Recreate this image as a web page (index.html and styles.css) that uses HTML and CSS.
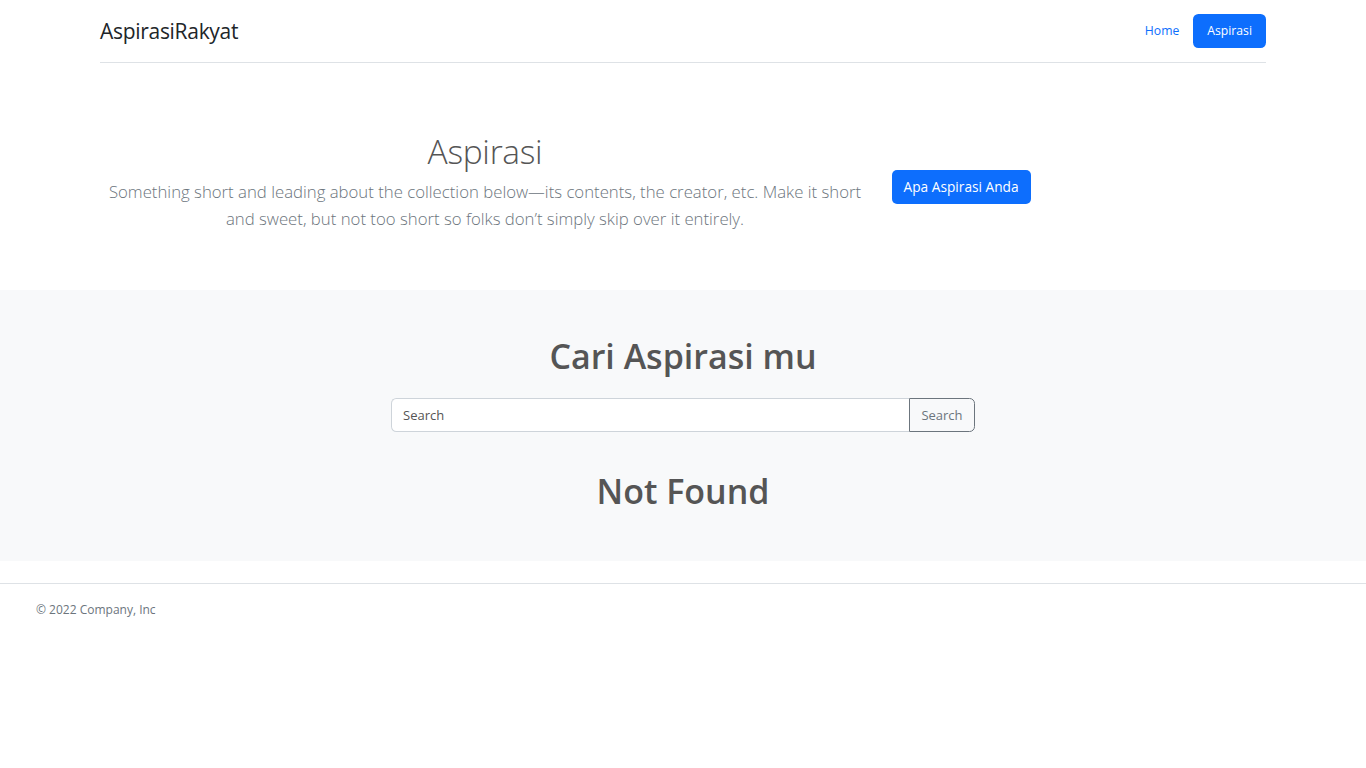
FILE: index.html
```html
<!DOCTYPE html>
<html lang="id">
<head>
<meta charset="utf-8">
<title>AspirasiRakyat</title>
<link rel="stylesheet" href="styles.css">
</head>
<body>
<header class="site-header">
  <a class="brand" href="#">AspirasiRakyat</a>
  <nav class="nav">
    <a class="nav-link" href="#">Home</a>
    <a class="nav-link active" href="#">Aspirasi</a>
  </nav>
</header>

<section class="hero">
  <div class="hero-text">
    <h1 class="hero-title">Aspirasi</h1>
    <p class="lead">Something short and leading about the collection below—its contents, the creator, etc. Make it short and sweet, but not too short so folks don’t simply skip over it entirely.</p>
  </div>
  <div class="hero-action">
    <a class="btn-primary" href="#">Apa Aspirasi Anda</a>
  </div>
</section>

<main class="search-section">
  <h1 class="section-title">Cari Aspirasi mu</h1>
  <form class="search-form">
    <input class="search-input" type="text" placeholder="Search">
    <button class="search-btn" type="button">Search</button>
  </form>
  <h1 class="not-found">Not Found</h1>
</main>

<footer class="site-footer">
  <p class="copyright">© 2022 Company, Inc</p>
</footer>
</body>
</html>
```

FILE: styles.css
```css
* { box-sizing: border-box; }

body {
  margin: 0;
  font-family: "Open Sans", "Noto Sans", "Liberation Sans", sans-serif;
  font-size: 14.4px;
  line-height: 1.5;
  color: #212529;
  background: #fff;
}

a { text-decoration: none; }

.site-header {
  width: 1166px;
  margin: 0 auto 21.6px;
  height: 63px;
  display: flex;
  align-items: center;
  justify-content: space-between;
  border-bottom: 1px solid #dee2e6;
  padding-bottom: 1px;
}

.brand {
  font-size: 21px;
  color: #212529;
  letter-spacing: -0.3px;
  margin-top: 3px;
}

.nav {
  display: flex;
  align-items: center;
}

.nav-link {
  font-size: 12.2px;
  line-height: 20px;
  padding: 7px 14px;
  color: #0d6efd;
  border-radius: 5.4px;
}

.nav-link.active {
  background: #0d6efd;
  color: #fff;
}

.hero {
  width: 1166px;
  margin: 0 auto;
  padding: 43.2px 0;
  display: flex;
  align-items: center;
  gap: 21.6px;
}

.hero-text {
  width: 770px;
  text-align: center;
}

.hero-title {
  margin: 2px 0 5.2px;
  font-size: 33.5px;
  font-weight: 300;
  line-height: 43.2px;
  color: #555;
  letter-spacing: -0.3px;
}

.lead {
  margin: 0 0 14.4px;
  font-size: 16.75px;
  font-weight: 300;
  line-height: 27px;
  color: #6c757d;
}

.btn-primary {
  display: inline-block;
  background: #0d6efd;
  color: #fff;
  font-size: 13.7px;
  line-height: 20px;
  padding: 7px 12px;
  border-radius: 5px;
}

.search-section {
  background: #f8f9fa;
  padding: 45px 0 48px;
  text-align: center;
}

.section-title {
  margin: 0 0 19.6px;
  font-size: 34px;
  font-weight: 600;
  line-height: 43.2px;
  color: #555;
}

.search-form {
  width: 584px;
  margin: 0 auto;
  display: flex;
  height: 34px;
}

.search-input {
  flex: 1;
  min-width: 0;
  height: 34px;
  border: 1px solid #ced4da;
  border-right: none;
  border-radius: 5.4px 0 0 5.4px;
  padding: 0 11px;
  font-family: inherit;
  font-size: 13px;
  color: #212529;
  background: #fff;
  outline: none;
}

.search-input::placeholder { color: #555; }

.search-btn {
  width: 66px;
  height: 34px;
  border: 1px solid #6c757d;
  border-radius: 0 5.4px 5.4px 0;
  background: transparent;
  color: #6c757d;
  font-family: inherit;
  font-size: 13px;
  padding: 0;
}

.not-found {
  margin: 38px 0 0;
  font-size: 34px;
  font-weight: 600;
  line-height: 43.2px;
  color: #555;
}

.site-footer {
  margin-top: 22.6px;
  border-top: 1px solid #dee2e6;
  padding: 16px 36px;
}

.copyright {
  margin: 0;
  font-size: 12px;
  line-height: 20px;
  color: #6c757d;
}
```
